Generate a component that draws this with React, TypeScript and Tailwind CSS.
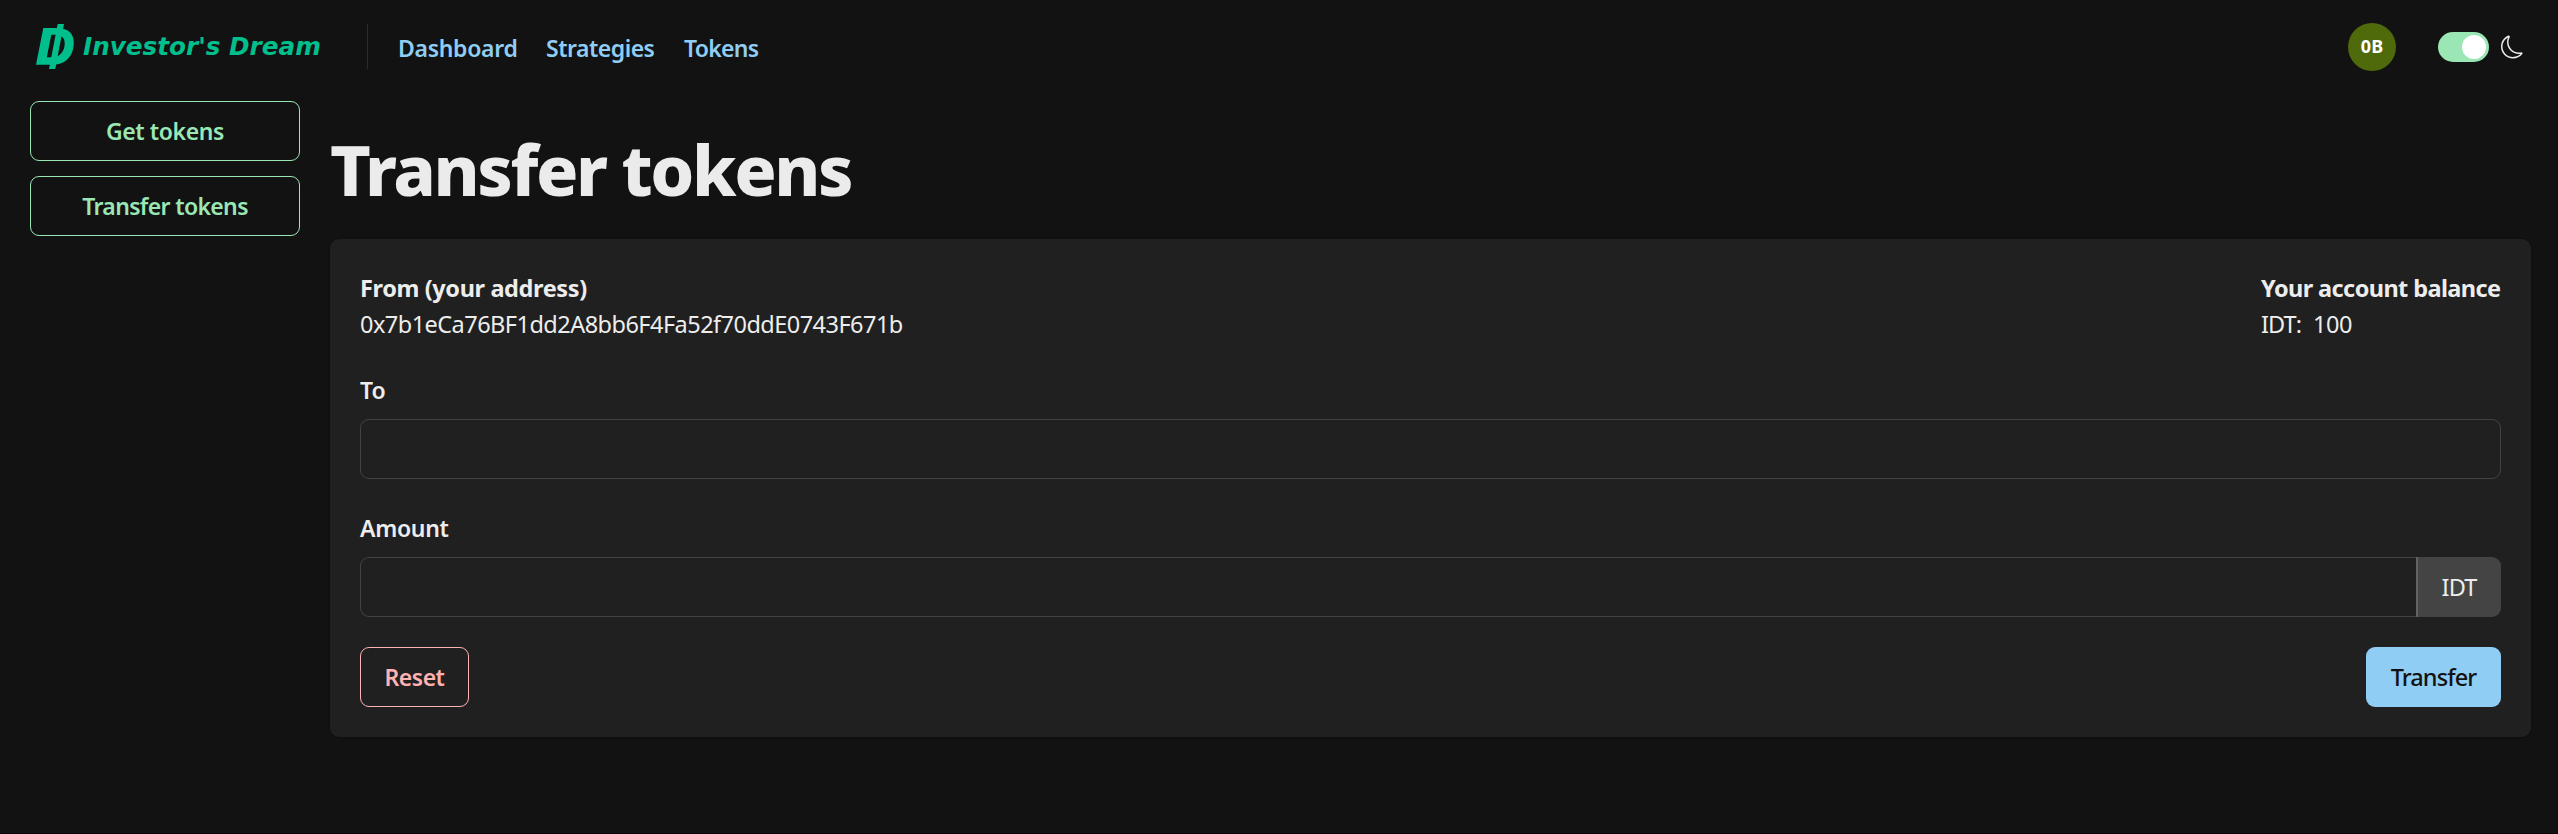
import { BsMoon } from "react-icons/bs";

function LogoMark() {
  return (
    <svg className="h-[45px] w-[38px] shrink-0" viewBox="36 24 38 45" fill="#00bf8d" fillRule="evenodd">
      <path d="M57.7 24H64L63.1 28.9C70 30 73.8 35.2 73.8 42.8C73.8 54.5 67 63.4 56.1 64.6L55.3 69H49L49.8 64.7H36L43.3 28H56.9ZM51.3 34.8L46.8 57.3H51.3L55.6 34.8ZM61.5 36.4L57.6 56.2C62.2 53.6 64.7 48.8 64.7 43.4C64.7 39.8 63.6 37.4 61.5 36.4Z" />
    </svg>
  );
}

function Header() {
  return (
    <header className="flex h-[93px] items-center pl-9 pr-[34px]">
      <LogoMark />
      <span className="ml-[9px] w-[284px] font-['DejaVu_Sans',sans-serif] text-[24.7px] font-bold italic leading-[36px] text-[#00bf8d]">
        Investor's Dream
      </span>
      <div className="h-[45px] w-px bg-[#2b2b2b]" />
      <nav className="flex pl-[30px] pt-[2px] text-[23px] font-semibold leading-[36px] text-[#90cdf4]">
        <a className="w-[148px] tracking-[-0.3px]">Dashboard</a>
        <a className="w-[138px] tracking-[-0.5px]">Strategies</a>
        <a className="tracking-[-0.7px]">Tokens</a>
      </nav>
      <div className="ml-auto flex items-center">
        <div className="flex size-12 items-center justify-center rounded-full bg-[#4f6a0b] text-[18px] font-bold text-white">
          0B
        </div>
        <div className="ml-[42px] flex h-[30px] w-[51px] items-center justify-end rounded-full bg-[#9ae6b4] pr-[3px]">
          <div className="size-6 rounded-full bg-white" />
        </div>
        <BsMoon className="ml-3 h-6 w-[23px] text-[#ebebeb]" />
      </div>
    </header>
  );
}

export default function App() {
  return (
    <div className="flex h-[834px] w-full flex-col border-b border-[#0a0008] bg-[#121212] font-['Noto_Sans',sans-serif] text-[23.5px] text-[#ededed]">
      <Header />
      <div className="flex items-start gap-[30px] pl-[30px] pr-[27px] pt-2">
        <aside className="flex w-[270px] shrink-0 flex-col gap-[15px] text-[23px] font-semibold text-[#9ae6b4]">
          <button className="h-[60px] rounded-[9px] border border-[#9ae6b4] pt-px tracking-[-0.4px]">Get tokens</button>
          <button className="h-[60px] rounded-[9px] border border-[#9ae6b4] pt-px tracking-[-0.65px]">Transfer tokens</button>
        </aside>
        <main className="flex-1">
          <h1 className="pt-[25px] text-[70px] font-extrabold leading-[86px] tracking-[-2.4px] text-[#ebebeb]">Transfer tokens</h1>
          <section className="mt-[27px] rounded-[9px] bg-[#202020] p-[30px] shadow-sm">
            <div className="flex justify-between">
              <div>
                <h2 className="h-9 font-bold leading-[38px] tracking-[-0.38px]">From (your address)</h2>
                <p className="h-9 leading-[38px] tracking-[-0.53px]">0x7b1eCa76BF1dd2A8bb6F4Fa52f70ddE0743F671b</p>
              </div>
              <div className="w-[240px] whitespace-nowrap">
                <h2 className="h-9 font-bold leading-[38px] tracking-[-0.6px]">Your account balance</h2>
                <p className="flex h-9 leading-[38px]">
                  <span className="w-[52px] tracking-[-0.9px]">IDT:</span>
                  <span className="tracking-[-0.5px]">100</span>
                </p>
              </div>
            </div>
            <label className="mt-[30px] block h-9 text-[23px] font-semibold leading-[38px]">To</label>
            <input className="mt-3 block h-[60px] w-full rounded-[9px] border border-[#424242] bg-transparent px-6 outline-none" />
            <label className="mt-[30px] block h-9 text-[23px] font-semibold leading-[38px] tracking-[-0.3px]">Amount</label>
            <div className="mt-3 flex h-[60px]">
              <input className="min-w-0 flex-1 rounded-l-[9px] border border-r-0 border-[#424242] bg-transparent px-6 outline-none" />
              <span className="flex w-[85px] items-center justify-center rounded-r-[9px] border-l-2 border-[#636363] bg-[#444444] pr-px pt-px tracking-[-0.9px]">
                IDT
              </span>
            </div>
            <div className="mt-[30px] flex justify-between">
              <button className="h-[60px] w-[109px] rounded-[9px] border border-[#feb2b2] pt-px text-[23px] font-semibold tracking-[-0.5px] text-[#feb2b2]">Reset</button>
              <button className="h-[60px] w-[135px] rounded-[9px] bg-[#90cdf4] pt-px font-medium tracking-[-0.9px] text-[#121212]">Transfer</button>
            </div>
          </section>
        </main>
      </div>
    </div>
  );
}
